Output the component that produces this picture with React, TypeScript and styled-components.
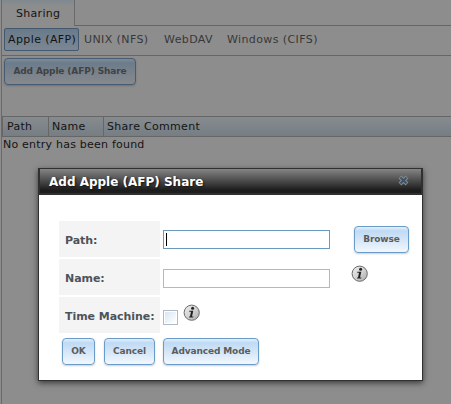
import React from "react";
import styled, { createGlobalStyle } from "styled-components";

const Global = createGlobalStyle`
  * { box-sizing: border-box; }
  body { margin: 0; background: #8d8d8d; overflow: hidden; }
  body, input, button { font-family: "DejaVu Sans", Verdana, sans-serif; font-size: 11px; }
`;

const Screen = styled.div`
  position: relative;
  width: 451px;
  height: 404px;
  overflow: hidden;
  padding-left: 1px;
  background: #8d8d8d;
  color: #141414;
`;

const Pane = styled.div`
  height: 404px;
  border-left: 1px solid #696a6b;
  letter-spacing: 0.3px;
`;

const TabStrip = styled.div`
  display: flex;
  height: 26px;
`;

const Tab = styled.div`
  width: 73px;
  height: 26px;
  padding: 6px 0 0 14px;
  line-height: 16px;
  border-right: 1px solid #696a6b;
  background: linear-gradient(#7f8990, #8d8d8d 6px);
`;

const StripFill = styled.div`
  flex: 1;
  border-bottom: 1px solid #666;
`;

const SubNav = styled.nav`
  display: flex;
  height: 30px;
  padding: 2px 0 0 2px;
  border-bottom: 1px solid #666;
`;

const SubTab = styled.div<{ $w: number; $active?: boolean }>`
  width: ${(p) => p.$w}px;
  height: 23px;
  padding-left: ${(p) => (p.$active ? 3 : 4)}px;
  letter-spacing: 0.4px;
  line-height: 21px;
  white-space: nowrap;
  border: 1px solid ${(p) => (p.$active ? "#425970" : "transparent")};
  border-radius: 2px;
  color: ${(p) => (p.$active ? "#101418" : "#383838")};
  background: ${(p) => (p.$active ? "linear-gradient(#6a7a8a, #7b8792)" : "none")};
`;

const Button = styled.button<{ $w: number; $dim?: boolean }>`
  flex: none;
  width: ${(p) => p.$w}px;
  height: 27px;
  padding: 0 0 1px;
  font-size: 9px;
  font-weight: bold;
  letter-spacing: -0.12px;
  white-space: nowrap;
  border-radius: 4px;
  color: ${(p) => (p.$dim ? "#424242" : "#5c5c5c")};
  border: 1px solid ${(p) => (p.$dim ? "#455c73" : "#6b9cc8")};
  background: ${(p) =>
    p.$dim
      ? "linear-gradient(#7f8b96, #6c7c8b 4px, #87898c)"
      : "linear-gradient(#e4f0fc, #bfdaf4 4px, #f2f7fd)"};
  box-shadow: 0 1px 2px rgba(0, 0, 0, 0.2);
`;

const Tools = styled.div`
  height: 60px;
  padding: 2px;
`;

const TableHead = styled.div`
  display: flex;
  height: 21px;
  padding-left: 1px;
  border: solid #666;
  border-width: 1px 0 1px 1px;
  background: linear-gradient(#868b8e, #767e84);
`;

const HeadCell = styled.div<{ $w: number }>`
  width: ${(p) => p.$w}px;
  padding-left: 3px;
  line-height: 20px;
  border-right: 1px solid #666;
  &:last-child { border-right: 0; }
`;

const Empty = styled.div`
  padding-left: 1px;
  letter-spacing: 0.22px;
  line-height: 16px;
`;

const Dialog = styled.section`
  position: absolute;
  left: 38px;
  top: 168px;
  width: 385px;
  height: 213px;
  border: 1px solid #303030;
  background: #fff;
  box-shadow: 0 2px 6px rgba(0, 0, 0, 0.6);
`;

const DialogTitle = styled.header`
  display: flex;
  justify-content: space-between;
  height: 26px;
  padding: 0 12px 0 9px;
  border: solid #303030;
  border-width: 0 1px 2px;
  background: linear-gradient(#858585, #1d1d1d 21px);
  color: #fff;
  font-size: 12px;
  font-weight: bold;
  line-height: 26px;
  text-shadow: 1px 1px 2px #111;
`;

const CloseIcon = styled.svg`
  width: 11px;
  height: 11px;
  margin-top: 6px;
`;

const Form = styled.div`
  display: flex;
  flex-direction: column;
  gap: 2px;
  padding: 26px 0 0 20px;
`;

const Row = styled.div`
  display: flex;
  height: 36px;
`;

const Label = styled.label`
  width: 101px;
  margin-right: 3px;
  padding: 2px 0 0 6px;
  background: #f4f4f4;
  color: #4e535a;
  font-weight: bold;
  letter-spacing: -0.05px;
  line-height: 35px;
  white-space: nowrap;
`;

const Field = styled.div<{ $focus?: boolean; $top: number }>`
  width: 167px;
  height: 19px;
  margin-top: ${(p) => p.$top}px;
  padding: 2px;
  border: 1px solid ${(p) => (p.$focus ? "#6b9ac0" : "#b3b8c3")};
  background: #fff;
`;

const Caret = styled.div`
  width: 1px;
  height: 13px;
  background: #000;
`;

const Check = styled.div`
  width: 15px;
  height: 15px;
  margin-top: 13px;
  border: 1px solid #b3b8c8;
  background: linear-gradient(135deg, #d9e7f2, #fff) content-box;
  padding: 1px;
`;

const Aside = styled.div<{ $left: number; $top: number }>`
  margin: ${(p) => p.$top}px 0 0 ${(p) => p.$left}px;
  line-height: 0;
`;

const Actions = styled.div`
  display: flex;
  gap: 9px;
  padding: 3px 0 0 3px;
`;

const LastAction = styled(Button)`
  margin-left: -1px;
`;

function Info() {
  return (
    <svg width="17" height="17" viewBox="0 0 17 17">
      <defs>
        <linearGradient id="metal" x1="0" y1="0" x2="1" y2="1">
          <stop offset="0" stopColor="#eeeeee" />
          <stop offset="0.5" stopColor="#d4d4d4" />
          <stop offset="1" stopColor="#aaaaaa" />
        </linearGradient>
      </defs>
      <circle cx="8.7" cy="8.7" r="7.6" fill="url(#metal)" stroke="#6c6c6c" />
      <circle cx="9.6" cy="4.3" r="1.5" fill="#222" />
      <path d="M6.4 6.8H10.3L9 12.4H10.5L10.2 13.4H5.9L6.2 12.4H7L8 7.8H6.2Z" fill="#222" />
    </svg>
  );
}

export default function App() {
  return (
    <Screen>
      <Global />
      <Pane>
        <TabStrip>
          <Tab>Sharing</Tab>
          <StripFill />
        </TabStrip>
        <SubNav>
          <SubTab $w={75} $active>Apple (AFP)</SubTab>
          <SubTab $w={80}>UNIX (NFS)</SubTab>
          <SubTab $w={63}>WebDAV</SubTab>
          <SubTab $w={100}>Windows (CIFS)</SubTab>
        </SubNav>
        <Tools>
          <Button $w={132} $dim>Add Apple (AFP) Share</Button>
        </Tools>
        <TableHead>
          <HeadCell $w={45}>Path</HeadCell>
          <HeadCell $w={55}>Name</HeadCell>
          <HeadCell $w={347}>Share Comment</HeadCell>
        </TableHead>
        <Empty>No entry has been found</Empty>
      </Pane>
      <Dialog>
        <DialogTitle>
          Add Apple (AFP) Share
          <CloseIcon viewBox="0 0 11 11">
            <path d="M2 2L9 9M9 2L2 9" stroke="#858b91" strokeWidth="4" />
            <path d="M2.5 2.5L8.5 8.5M8.5 2.5L2.5 8.5" stroke="#405264" strokeWidth="2" />
          </CloseIcon>
        </DialogTitle>
        <Form>
          <Row>
            <Label>Path:</Label>
            <Field $focus $top={9}><Caret /></Field>
            <Aside $left={24} $top={5}><Button $w={55}>Browse</Button></Aside>
          </Row>
          <Row>
            <Label>Name:</Label>
            <Field $top={10} />
            <Aside $left={21} $top={6}><Info /></Aside>
          </Row>
          <Row>
            <Label>Time Machine:</Label>
            <Check />
            <Aside $left={5} $top={7}><Info /></Aside>
          </Row>
          <Actions>
            <Button $w={33}>OK</Button>
            <Button $w={51}>Cancel</Button>
            <LastAction $w={96}>Advanced Mode</LastAction>
          </Actions>
        </Form>
      </Dialog>
    </Screen>
  );
}
